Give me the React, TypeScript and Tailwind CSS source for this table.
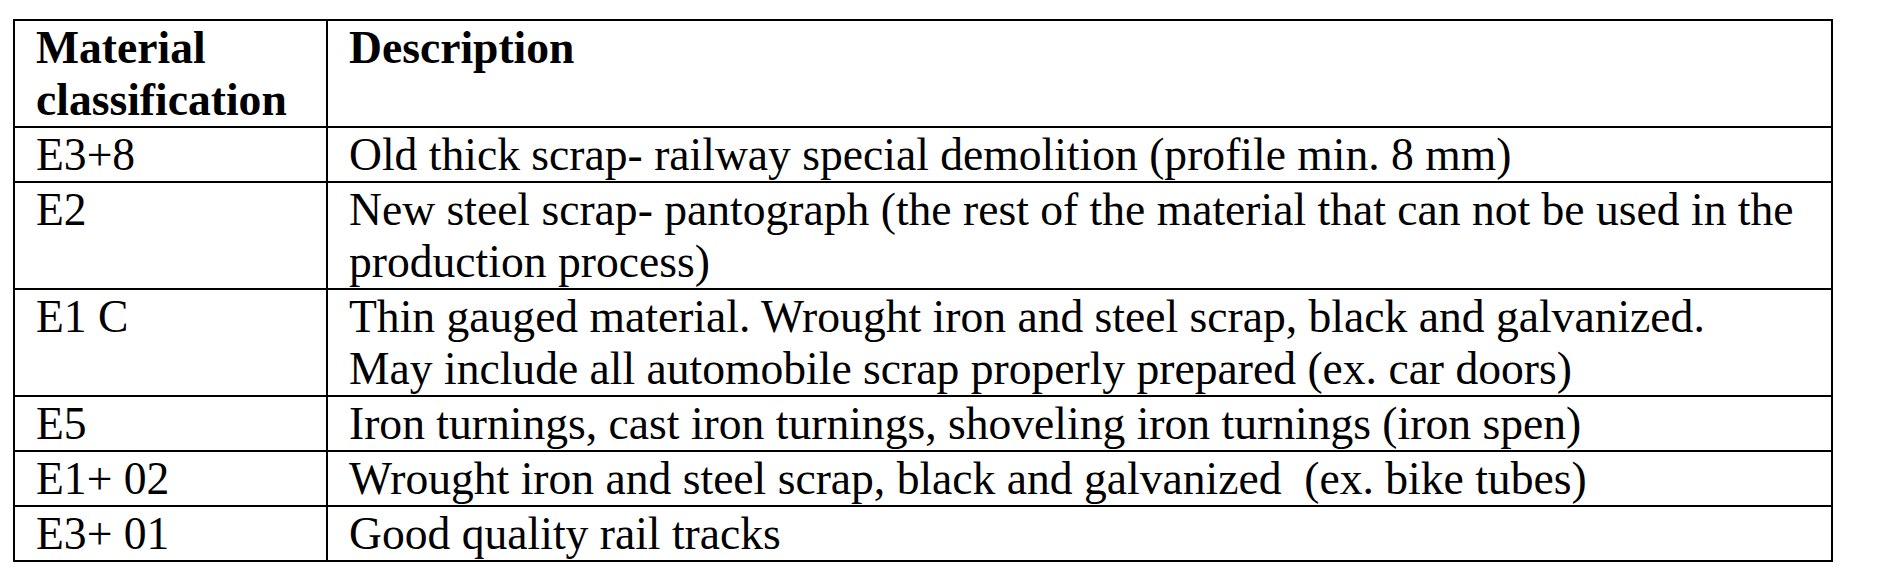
import React from "react";

const rows: { code: string; desc: React.ReactNode }[] = [
  { code: "E3+8", desc: "Old thick scrap- railway special demolition (profile min. 8 mm)" },
  {
    code: "E2",
    desc: (
      <>
        New steel scrap- pantograph (the rest of the material that can not be used in the
        <br />
        production process)
      </>
    ),
  },
  {
    code: "E1 C",
    desc: (
      <>
        Thin gauged material. Wrought iron and steel scrap, black and galvanized.
        <br />
        May include all automobile scrap properly prepared (ex. car doors)
      </>
    ),
  },
  { code: "E5", desc: "Iron turnings, cast iron turnings, shoveling iron turnings (iron spen)" },
  { code: "E1+ 02", desc: "Wrought iron and steel scrap, black and galvanized\u00a0 (ex. bike tubes)" },
  { code: "E3+ 01", desc: "Good quality rail tracks" },
];

export default function App() {
  return (
    <div
      className="w-[1890px] h-[569px] bg-white text-black overflow-hidden"
      style={{ fontFamily: '"Liberation Serif", "Times New Roman", serif' }}
    >
      <table className="ml-[13px] mt-[19px] border-collapse w-[1820px] table-fixed text-[45.6px] leading-[52px]">
        <colgroup>
          <col className="w-[313px]" />
          <col />
        </colgroup>
        <thead>
          <tr>
            <th className="border-2 border-black text-left align-top font-bold pl-[21px] pt-[1px] pb-0 whitespace-nowrap">
              Material
              <br />
              classification
            </th>
            <th className="border-2 border-black text-left align-top font-bold pl-[21px] pt-[1px] pb-0">
              Description
              <br />
              &nbsp;
            </th>
          </tr>
        </thead>
        <tbody>
          {rows.map((r) => (
            <tr key={r.code}>
              <td className="border-2 border-black align-top pl-[21px] pt-[1px] pb-0 whitespace-nowrap">
                {r.code}
              </td>
              <td className="border-2 border-black align-top pl-[21px] pt-[1px] pb-0 whitespace-nowrap">
                {r.desc}
              </td>
            </tr>
          ))}
        </tbody>
      </table>
    </div>
  );
}
